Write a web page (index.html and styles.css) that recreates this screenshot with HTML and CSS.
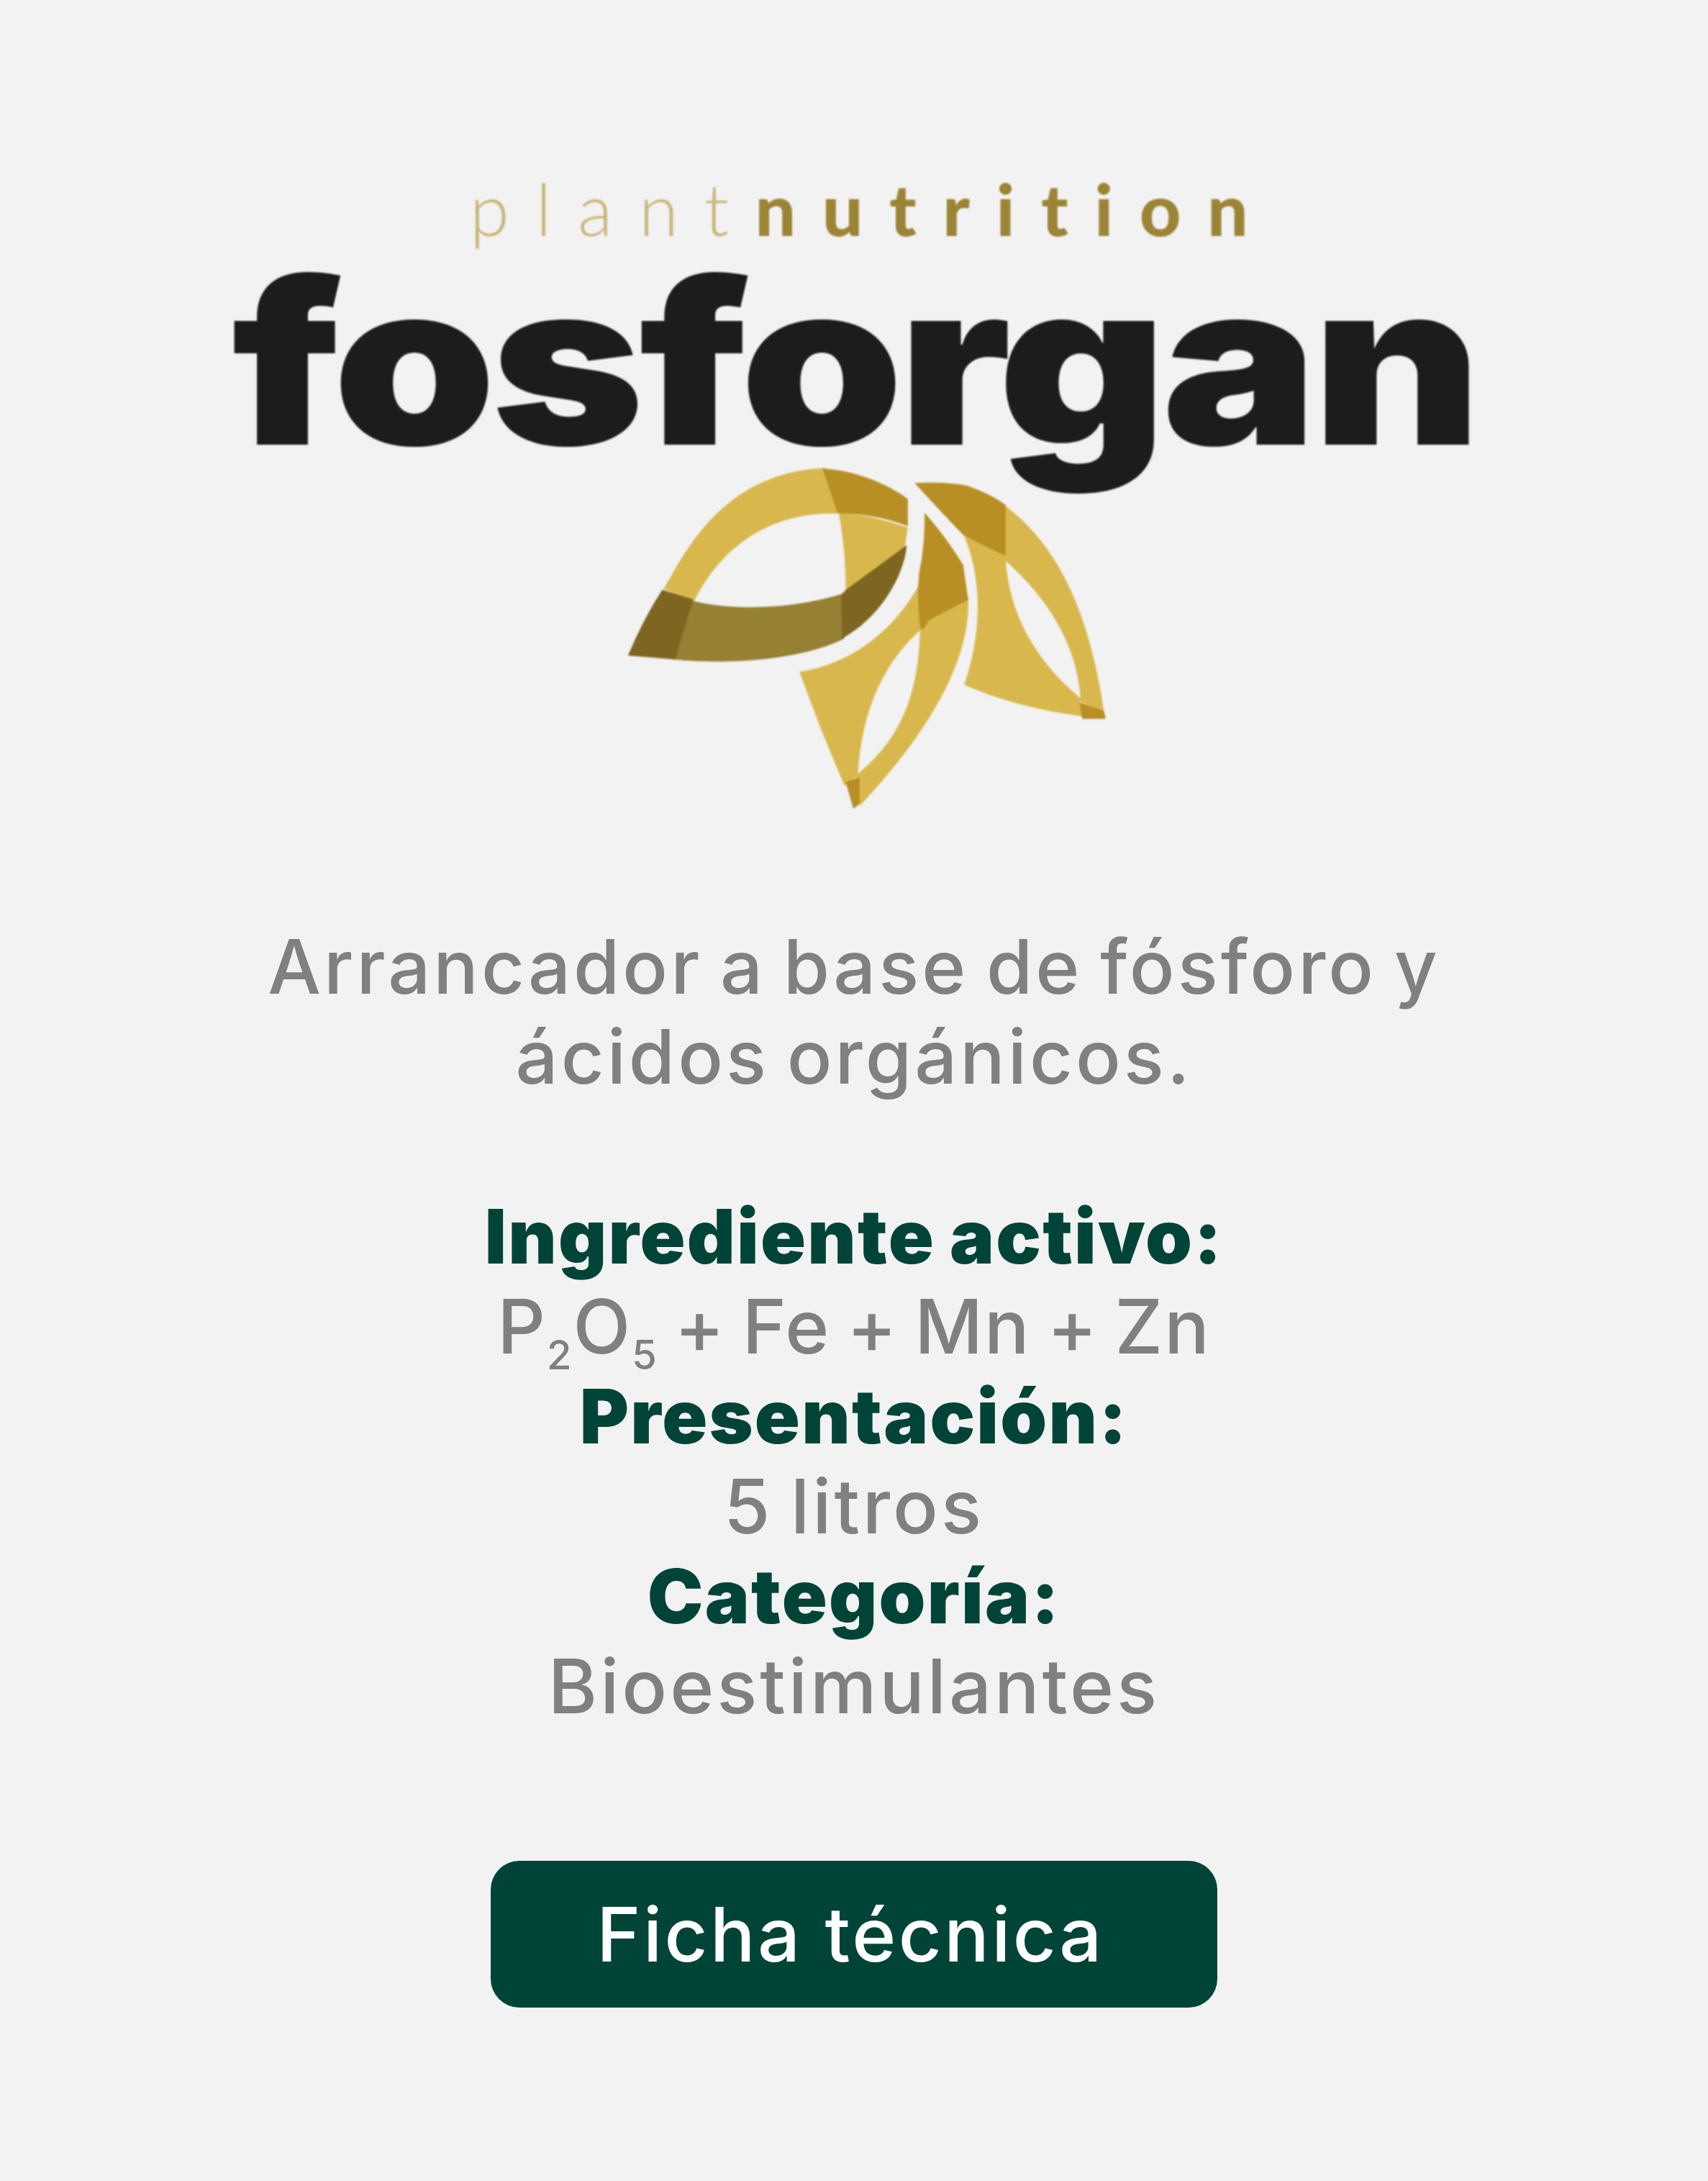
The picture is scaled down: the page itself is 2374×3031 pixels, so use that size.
FILE: index.html
```html
<!DOCTYPE html>
<html lang="es">
<head>
    <meta charset="utf-8">
    <title>Fosforgan</title>
    <link rel="stylesheet" href="styles.css">
</head>
<body>
    <div class="product-card">
        <div class="logo">
            <div class="logo-tag"><span class="logo-tag-thin">plant</span><span class="logo-tag-bold">nutrition</span></div>
            <div class="logo-name">fosforgan</div>
            <svg class="logo-leaf" viewBox="0 0 1568 1560" preserveAspectRatio="none">
                <!-- big leaf -->
                <path class="gold" d="M180 565 C240 420 350 80 655 62 L695 250 C520 240 360 355 268 615 Z"/>
                <path class="gold" d="M695 245 Q800 262 897 310 L888 395 L716 570 Q716 400 695 245 Z"/>
                <path class="gold-dark" d="M648 65 C740 70 840 130 897 190 L897 302 C830 265 760 250 692 248 Z"/>
                <path class="olive" d="M255 612 C340 650 530 665 710 585 L710 772 C600 850 400 885 205 858 Z"/>
                <path class="olive-dark" d="M894 385 C885 520 810 690 705 770 L702 590 L716 570 Z"/>
                <path class="olive-dark" d="M175 570 L265 610 L212 858 L75 842 Q120 690 175 570 Z"/>
                <!-- middle leaf -->
                <path class="gold" d="M580 912 C730 880 860 740 935 540 L940 730 C840 850 760 1050 750 1345 L712 1385 Q640 1150 580 912 Z"/>
                <path class="gold" d="M935 712 L1075 600 C1085 900 920 1220 757 1468 L745 1345 C860 1210 930 1050 935 730 Z"/>
                <path class="gold-dark" d="M948 250 Q1010 350 1060 465 L1075 610 L960 695 L945 730 L935 730 Q925 600 932 500 Q950 380 948 250 Z"/>
                <path class="gold-dark" d="M716 1372 L755 1352 L755 1462 L738 1480 Z"/>
                <!-- right leaf -->
                <path class="gold" d="M1180 215 C1330 370 1430 640 1475 1080 L1408 1035 C1400 800 1310 600 1180 440 Z"/>
                <path class="gold" d="M1065 345 L1185 425 C1190 640 1260 850 1405 1020 L1410 1095 Q1220 1060 1065 965 C1110 780 1125 550 1065 345 Z"/>
                <path class="gold-dark" d="M920 125 Q1000 118 1070 135 C1110 155 1150 180 1185 215 L1185 425 Q1120 385 1062 340 Q1000 250 920 125 Z"/>
                <path class="gold-dark" d="M1405 1040 L1475 1075 L1480 1106 L1412 1106 Z"/>
            </svg>
        </div>

        <p class="product-text">
            Arrancador a base de fósforo y<br>
            ácidos orgánicos.<br>
            <br>
            <strong>Ingrediente activo:</strong><br>
            <span class="formula">P<sub>2</sub>O<sub>5</sub> + Fe + Mn + Zn</span><br>
            <strong>Presentación:</strong><br>
            5 litros<br>
            <strong>Categoría:</strong><br>
            Bioestimulantes
        </p>

        <a class="sheet-button" href="#">Ficha técnica</a>
    </div>
</body>
</html>
```

FILE: styles.css
```css
body {
    font-family: Inter, "Liberation Sans", sans-serif;
    background-color: #f2f2f2;
    margin: 0;
    padding: 0;
}

.product-card {
    display: flex;
    flex-direction: column;
    align-items: center;
    height: 3031px;
    padding-top: 234px;
    box-sizing: border-box;
}

.logo {
    display: flex;
    flex-direction: column;
    align-items: center;
    filter: blur(1px);
}

.logo-tag {
    font-family: Lato, sans-serif;
    font-size: 100px;
    line-height: 110px;
    letter-spacing: 36.5px;
    color: #9c8436;
    margin: 0 0 15px 50px;
}

.logo-tag-thin {
    font-weight: 300;
    color: #c9b679;
}

.logo-tag-bold {
    font-weight: 900;
}

.logo-name {
    font-family: Inter, sans-serif;
    font-weight: 900;
    font-size: 315px;
    line-height: 290px;
    letter-spacing: -6px;
    color: #1c1c1b;
    transform: scaleX(1.15);
}

.logo-leaf {
    display: block;
    width: 740px;
    height: 520px;
    margin: -19px 0 0 42px;
}

.logo-leaf path {
    stroke-width: 2px;
}

.gold { fill: #d8b84c; stroke: #d8b84c; }
.gold-dark { fill: #b88f24; stroke: #b88f24; }
.olive { fill: #958033; stroke: #958033; }
.olive-dark { fill: #7f6620; stroke: #7f6620; }

.product-text {
    margin: 131px 0 0;
    font-size: 104px;
    font-weight: 500;
    line-height: 125px;
    letter-spacing: 4px;
    word-spacing: -7px;
    color: #808080;
    text-align: center;
}

.product-text strong {
    font-weight: 900;
    color: #004438;
    letter-spacing: 2.2px;
    word-spacing: -3px;
}

.product-text .formula {
    letter-spacing: 2px;
}

.product-text sub {
    font-size: 56px;
    line-height: 0;
}

.sheet-button {
    display: block;
    width: 1010px;
    height: 204px;
    margin-top: 180px;
    padding-right: 10px;
    box-sizing: border-box;
    background-color: #004438;
    border-radius: 40px;
    font-size: 104px;
    line-height: 204px;
    font-weight: 500;
    letter-spacing: 3.4px;
    text-align: center;
    text-decoration: none;
    color: #fff;
}
```
